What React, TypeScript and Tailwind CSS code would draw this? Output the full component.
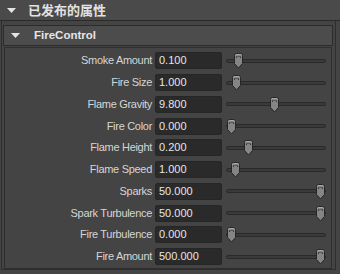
import React from 'react';

const ROWS = [
  { label: 'Smoke Amount', value: '0.100', pos: 12 },
  { label: 'Fire Size', value: '1.000', pos: 10 },
  { label: 'Flame Gravity', value: '9.800', pos: 48 },
  { label: 'Fire Color', value: '0.000', pos: 5 },
  { label: 'Flame Height', value: '0.200', pos: 22 },
  { label: 'Flame Speed', value: '1.000', pos: 9 },
  { label: 'Sparks', value: '50.000', pos: 94 },
  { label: 'Spark Turbulence', value: '50.000', pos: 94 },
  { label: 'Fire Turbulence', value: '0.000', pos: 5 },
  { label: 'Fire Amount', value: '500.000', pos: 94 },
];

const Caret = ({ className }: { className?: string }) => (
  <svg width="9" height="5" viewBox="0 0 9 5" className={className}>
    <path d="M0 0 H9 L4.5 5 Z" fill="#e4e4e4" />
  </svg>
);

const Thumb = () => (
  <svg width="11" height="16" viewBox="0 0 11 16">
    <path d="M1.5 2.5 Q1.5 0.5 3.5 0.5 H7.5 Q9.5 0.5 9.5 2.5 V10.5 L5.5 15 L1.5 10.5 Z" fill="#858585" stroke="#262626" />
    <path d="M2.5 2.5 Q2.5 1.5 3.5 1.5 H7.5 Q8.5 1.5 8.5 2.5" fill="none" stroke="#a8a8a8" />
    <rect x="3" y="3" width="1" height="2" fill="#3a3a3a" />
    <rect x="7" y="3" width="1" height="2" fill="#3a3a3a" />
    <rect x="3" y="3" width="5" height="1" fill="#5a5a5a" />
  </svg>
);

export default function App() {
  return (
    <div
      className="w-[340px] h-[274px] bg-[#444444] overflow-hidden flex flex-col"
      style={{ fontFamily: '"Liberation Sans", "Noto Sans CJK SC", sans-serif' }}
    >
      {/* top section header */}
      <div className="h-[21px] shrink-0 bg-[#4a4a4a] border-b border-[#2a2a2a] flex items-center">
        <Caret className="ml-[7px]" />
        <span className="ml-[12px] text-[13px] font-bold text-[#e2e2e2] leading-none">已发布的属性</span>
      </div>

      <div className="ml-[1px] mr-[4px] h-[249px] border-l border-r border-b border-[#2e2e2e] pt-[4px] pl-[1px] pr-[2px]">
        {/* FireControl frame header */}
        <div className="h-[21px] bg-[#4c4c4c] border border-[#2b2b2b] flex items-center">
          <Caret className="ml-[7px]" />
          <span className="ml-[14px] text-[11.5px] font-bold text-[#e6e6e6] leading-none">FireControl</span>
        </div>

        <div className="mt-[1px] mx-[1px] border border-[#2e2e2e] pt-[2px]">
          {ROWS.map(row => (
            <div key={row.label} className="h-[21.75px] flex items-center">
              <div className="w-[147px] text-right text-[11px] tracking-[-0.3px] text-[#d6d6d6] leading-none">
                {row.label}
              </div>
              <div className="ml-[3px] w-[67px] h-[17px] bg-[#2a2a2a] rounded-[2px] border border-[#262626] flex items-center pl-[3px] text-[11px] text-[#e6e6e6] leading-none">
                {row.value}
              </div>
              <div className="ml-[4px] w-[100px] h-[17px] relative flex items-center">
                <div className="w-full h-[4px] rounded-full bg-[#3a3a3a] border border-[#2a2a2a]" />
                <div className="absolute top-[1px]" style={{ left: row.pos - 5 }}>
                  <Thumb />
                </div>
              </div>
            </div>
          ))}
        </div>
      </div>
    </div>
  );
}
